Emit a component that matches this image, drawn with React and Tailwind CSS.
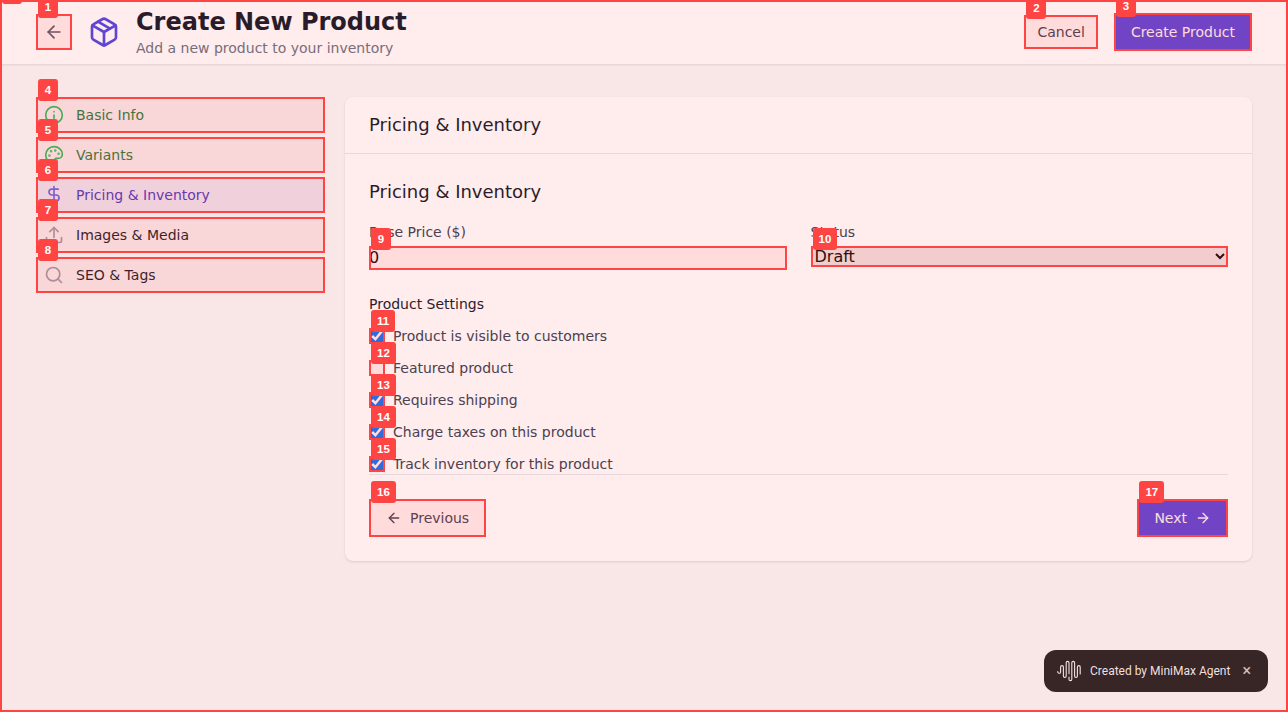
import React from "react";
import { ArrowLeft, ArrowRight, Package, Info, Palette, DollarSign, Upload, Search } from "lucide-react";

function Marker({ n }) {
  return (
    <span className="pointer-events-none absolute inset-0 z-30 border-2 border-[#ff4444] bg-[#ff4444]/10">
      <span className="absolute -top-5 left-0 block h-[22px] min-w-5 rounded-[3px] bg-[#ff4444] px-1.5 py-1 text-center font-['Liberation_Sans',sans-serif] text-[11.5px] leading-[14px] font-bold text-white">
        {n}
      </span>
    </span>
  );
}

const steps = [
  { n: 4, label: "Basic Info", Icon: Info, box: "bg-gray-50 text-[#15803d]", icon: "text-[#22c55e]" },
  { n: 5, label: "Variants", Icon: Palette, box: "bg-gray-50 text-[#15803d]", icon: "text-[#22c55e]" },
  { n: 6, label: "Pricing & Inventory", Icon: DollarSign, box: "bg-[#eef2ff] text-[#4338ca]", icon: "text-[#6366f1]" },
  { n: 7, label: "Images & Media", Icon: Upload, box: "bg-gray-50 text-gray-900", icon: "text-gray-400" },
  { n: 8, label: "SEO & Tags", Icon: Search, box: "bg-gray-50 text-gray-900", icon: "text-gray-400" },
];

const settings = [
  { n: 11, label: "Product is visible to customers", on: true },
  { n: 12, label: "Featured product", on: false },
  { n: 13, label: "Requires shipping", on: true },
  { n: 14, label: "Charge taxes on this product", on: true },
  { n: 15, label: "Track inventory for this product", on: true },
];

function Header() {
  return (
    <header className="h-[65px] border-b border-gray-200 bg-white shadow-xs">
      <div className="mx-auto flex h-16 max-w-7xl items-center justify-between px-8">
        <div className="flex items-center">
          <button className="relative mr-4 p-2 text-gray-600">
            <ArrowLeft className="size-5" />
            <Marker n={1} />
          </button>
          <Package className="mr-4 size-8 text-[#4f46e5]" />
          <div>
            <h1 className="text-2xl font-bold text-gray-900">Create New Product</h1>
            <p className="text-sm text-gray-500">Add a new product to your inventory</p>
          </div>
        </div>
        <div className="flex items-center gap-4">
          <button className="relative border border-transparent px-3 py-1.5 text-sm text-gray-700">
            Cancel
            <span className="absolute -inset-px"><Marker n={2} /></span>
          </button>
          <button className="relative border border-transparent bg-[#4f46e5] px-4 py-2 text-sm text-white">
            Create Product
            <span className="absolute -inset-px"><Marker n={3} /></span>
          </button>
        </div>
      </div>
    </header>
  );
}

function Toast() {
  return (
    <div className="fixed right-5 bottom-5 flex h-[42px] w-56 items-center rounded-xl bg-[#222] pl-[13px] font-[Roboto,sans-serif] text-xs text-white/95">
      <svg className="mr-2 h-6 w-[25px]" viewBox="0 0 25 24" fill="none" stroke="currentColor" strokeWidth="1.1" strokeLinecap="round">
        <path d="M.8 12.5v.4a1.4 1.4 0 0 0 2.8 0V8a1.4 1.4 0 0 1 2.8 0v9a1.4 1.4 0 0 0 2.8 0V3.8a1.4 1.4 0 0 1 2.8 0v11" />
        <path d="M12 18v2.2a1.4 1.4 0 0 0 2.8 0V3.8a1.4 1.4 0 0 1 2.8 0V17a1.4 1.4 0 0 0 2.8 0V8a1.4 1.4 0 0 1 2.8 0v7" />
      </svg>
      <span className="whitespace-nowrap">Created by MiniMax Agent</span>
      <span className="ml-3 text-base leading-none text-white/80">×</span>
    </div>
  );
}

export default function App() {
  return (
    <div className="relative h-[712px] overflow-hidden bg-gray-50 font-['DejaVu_Sans',sans-serif]">
      <Header />
      <main className="mx-auto grid max-w-7xl grid-cols-12 items-start gap-x-5 px-8 pt-8">
        <nav className="col-span-3 flex flex-col gap-1">
          {steps.map(({ n, label, Icon, box, icon }) => (
            <button key={n} className={`relative flex items-center p-2 text-sm ${box}`}>
              <Icon className={`mr-3 size-5 ${icon}`} />
              {label}
              <Marker n={n} />
            </button>
          ))}
        </nav>
        <section className="col-span-9 rounded-lg bg-white shadow-sm">
          <div className="border-b border-gray-200 px-6 py-3.5">
            <h2 className="text-lg text-gray-900">Pricing &amp; Inventory</h2>
          </div>
          <div className="p-6">
            <h3 className="text-lg text-gray-900">Pricing &amp; Inventory</h3>
            <div className="mt-4 grid grid-cols-2 gap-6">
              <div>
                <label className="mb-1 block text-sm text-gray-700">Base Price ($)</label>
                <div className="relative h-6">
                  <input type="number" defaultValue="0" className="block h-6 w-full text-base" />
                  <Marker n={9} />
                </div>
              </div>
              <div>
                <label className="mb-1 block text-sm text-gray-700">Status</label>
                <div className="relative h-[21px]">
                  <select className="block h-[21px] w-full bg-[#efefef] text-base">
                    <option>Draft</option>
                  </select>
                  <Marker n={10} />
                </div>
              </div>
            </div>
            <h4 className="mt-6 text-sm text-gray-900">Product Settings</h4>
            <div className="mt-3 flex flex-col gap-3">
              {settings.map(({ n, label, on }) => (
                <label key={n} className="flex items-center text-sm text-gray-700">
                  <span className="relative mr-2 size-4">
                    <input type="checkbox" defaultChecked={on} className="block size-4" />
                    <Marker n={n} />
                  </span>
                  {label}
                </label>
              ))}
            </div>
            <div className="flex justify-between border-t border-gray-200 pt-6">
              <button className="relative flex items-center border border-transparent px-4 py-2 text-sm text-gray-700">
                <ArrowLeft className="mr-2 size-4" />
                Previous
                <span className="absolute -inset-px"><Marker n={16} /></span>
              </button>
              <button className="relative flex items-center border border-transparent bg-[#4f46e5] px-4 py-2 text-sm text-white">
                Next
                <ArrowRight className="ml-2 size-4" />
                <span className="absolute -inset-px"><Marker n={17} /></span>
              </button>
            </div>
          </div>
        </section>
      </main>
      <Toast />
      <div className="pointer-events-none fixed inset-0 z-20">
        <Marker n={0} />
      </div>
    </div>
  );
}
